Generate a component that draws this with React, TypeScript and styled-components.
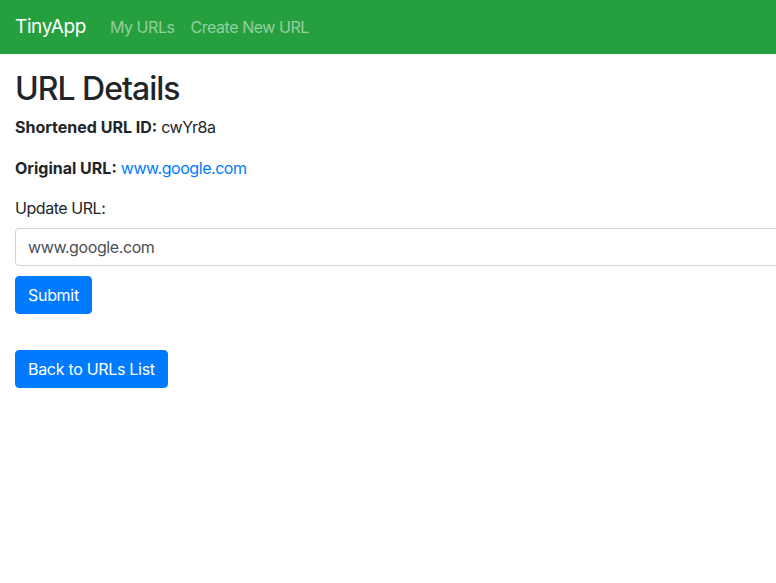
import React from "react";
import styled, { createGlobalStyle } from "styled-components";

const Global = createGlobalStyle`
  html, body { margin: 0; padding: 0; }
  body {
    font-family: Inter, "Liberation Sans", sans-serif;
    font-size: 16px;
    line-height: 1.5;
    letter-spacing: -0.45px;
    color: #212529;
    background: #fff;
    overflow-x: hidden;
  }
  b { letter-spacing: 0; }
  * { box-sizing: border-box; }
`;

const Navbar = styled.nav`
  display: flex;
  align-items: center;
  height: 54px;
  padding: 0 15px;
  background: #26a03f;
`;

const Brand = styled.a`
  font-size: 19px;
  letter-spacing: -0.38px;
  color: #fff;
  text-decoration: none;
  margin-right: 24px;
`;

const NavLink = styled.a`
  font-size: 16px;
  color: rgba(255, 255, 255, 0.5);
  text-decoration: none;
  margin-right: 16px;
`;

const Main = styled.main`
  padding: 16px 15px 0;
`;

const Title = styled.h1`
  font-size: 32px;
  font-weight: 500;
  line-height: 1.2;
  letter-spacing: -1px;
  margin: 0 0 7px;
`;

const Para = styled.p<{ $mb?: number }>`
  margin: 0 0 ${(p) => p.$mb ?? 16}px;
`;

const Link = styled.a`
  color: #007bff;
  text-decoration: none;
`;

const Label = styled.label`
  display: block;
  margin-bottom: 8px;
`;

const Input = styled.input`
  display: block;
  width: 900px;
  height: 38px;
  padding: 6px 12px;
  font: inherit;
  letter-spacing: -0.4px;
  color: #495057;
  border: 1px solid #ced4da;
  border-radius: 4px;
  margin-bottom: 10px;
`;

const Button = styled.button<{ $gap?: number }>`
  display: inline-block;
  height: 38px;
  padding: 0 12px;
  font: inherit;
  letter-spacing: -0.3px;
  color: #fff;
  background: #007bff;
  border: 1px solid #007bff;
  border-radius: 4px;
  margin-top: ${(p) => p.$gap ?? 0}px;
`;

const Form = styled.form`
  margin: 0;
`;

export default function App() {
  return (
    <>
      <Global />
      <Navbar>
        <Brand href="#">TinyApp</Brand>
        <NavLink href="#">My URLs</NavLink>
        <NavLink href="#">Create New URL</NavLink>
      </Navbar>
      <Main>
        <Title>URL Details</Title>
        <Para $mb={17}>
          <b>Shortened URL ID:</b> cwYr8a
        </Para>
        <Para>
          <b>Original URL:</b> <Link href="#">www.google.com</Link>
        </Para>
        <Form>
          <Label>Update URL:</Label>
          <Input defaultValue="www.google.com" />
          <Button type="button">Submit</Button>
        </Form>
        <Button type="button" $gap={36}>Back to URLs List</Button>
      </Main>
    </>
  );
}
